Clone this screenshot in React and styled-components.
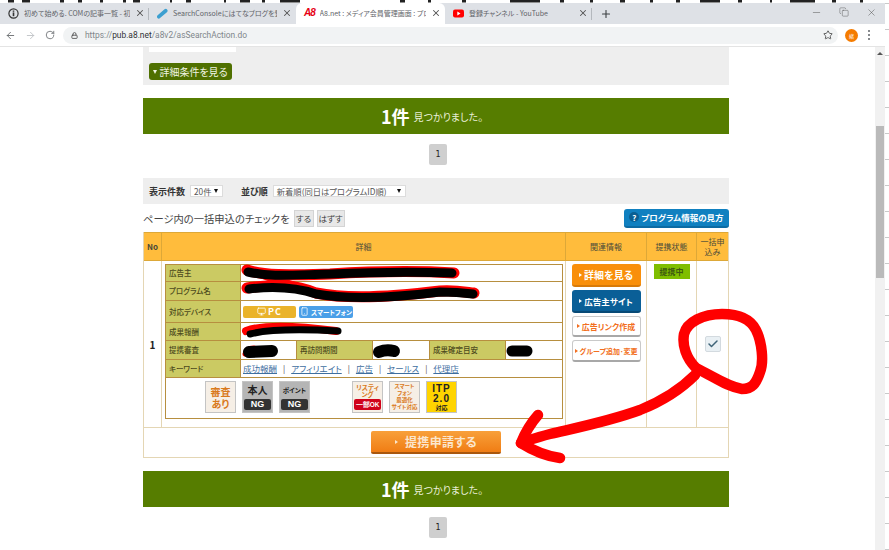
import React from "react";
import styled, { createGlobalStyle } from "styled-components";
import {
  ArrowLeft,
  ArrowRight,
  RotateCw,
  Lock,
  Star,
  X,
  Plus,
  Minus,
  Copy,
  Monitor,
  Smartphone,
  Check,
} from "lucide-react";

const GlobalStyle = createGlobalStyle`
  html, body {
    margin: 0;
    padding: 0;
    background: #fff;
    overflow: hidden;
  }
  * { box-sizing: border-box; }
`;

const Frame = styled.div`
  position: relative;
  width: 889px;
  height: 550px;
  overflow: hidden;
  display: flex;
  flex-direction: column;
  font-family: "Noto Sans CJK JP", "Noto Sans", sans-serif;
  font-feature-settings: "palt";
  color: #333;
`;
const TopStrip = styled.svg`
  display: block;
  width: 889px;
  height: 3px;
  flex: none;
`;
const Body = styled.div`
  display: flex;
  flex: 1;
  min-height: 0;
`;
const Browser = styled.div`
  width: 885px;
  display: flex;
  flex-direction: column;
`;
const Ruler = styled.div`
  width: 4px;
  background-image: linear-gradient(to bottom, #c9c9c9 1px, #fff 1px);
  background-size: 4px 26px;
`;

/* tabs */
const TabBar = styled.div`
  height: 21px;
  flex: none;
  background: #dee1e6;
  display: flex;
  align-items: flex-end;
`;
const Tab = styled.div`
  width: ${(p) => p.$w}px;
  height: 21px;
  display: flex;
  align-items: center;
  padding: 0 4px 1px 8px;
  gap: 5px;
  font-size: 7px;
  line-height: 10px;
  color: #5f6368;
  background: ${(p) => (p.$active ? "#fff" : "transparent")};
  border-radius: 6px 6px 0 0;
  white-space: nowrap;
`;
const TabDivider = styled.div`
  width: 1px;
  height: 12px;
  align-self: center;
  margin-left: -1px;
  background: #b4b8bd;
`;
const TabTitle = styled.span`
  flex: 1;
  overflow: hidden;
`;
const NewTab = styled.div`
  width: 28px;
  height: 21px;
  display: flex;
  align-items: center;
  justify-content: center;
  color: #3c4043;
`;
const WindowControls = styled.div`
  margin-left: auto;
  height: 21px;
  display: flex;
  align-items: flex-start;
  gap: 17px;
  padding: 4px 8px 0 0;
  color: #444;
`;
const A8Mark = styled.span`
  color: #e60012;
  font-family: "Liberation Sans", sans-serif;
  font-weight: 700;
  font-style: italic;
  font-size: 10px;
  letter-spacing: -1px;
`;

/* address bar */
const Toolbar = styled.div`
  height: 22px;
  flex: none;
  background: #fff;
  display: flex;
  align-items: center;
  padding-left: 5px;
  color: #6a6d71;
`;
const NavIcons = styled.div`
  width: 58px;
  display: flex;
  align-items: center;
  gap: 9px;
`;
const Omnibox = styled.div`
  width: 775px;
  height: 17px;
  background: #f1f3f4;
  border-radius: 9px;
  display: flex;
  align-items: center;
  padding: 0 5px 0 8px;
  font-family: "Roboto", sans-serif;
  font-size: 8.4px;
  color: #80868b;
`;
const Host = styled.span`
  color: #303134;
`;
const Url = styled.div`
  margin-left: 7px;
  flex: 1;
`;
const Avatar = styled.div`
  width: 13px;
  height: 13px;
  margin-left: 7px;
  border-radius: 50%;
  background: #f57c00;
  color: #fff;
  font-size: 5px;
  display: flex;
  align-items: center;
  justify-content: center;
`;
const MenuDots = styled.div`
  margin-left: 10px;
  display: flex;
  flex-direction: column;
  gap: 2px;
`;
const Dot = styled.i`
  width: 2px;
  height: 2px;
  border-radius: 50%;
  background: #5f6368;
`;

/* page */
const Viewport = styled.div`
  flex: 1;
  min-height: 0;
  display: flex;
  border-top: 1px solid #e4e4e4;
`;
const Page = styled.div`
  flex: 1;
  padding-left: 143px;
  overflow: hidden;
`;
const Scrollbar = styled.div`
  width: 10px;
  background: #f1f1f1;
  display: flex;
  flex-direction: column;
  align-items: center;
`;
const ScrollArrow = styled.div`
  margin: 5px 0 71px;
  height: 3px;
  width: 6px;
  border-left: 3px solid transparent;
  border-right: 3px solid transparent;
  border-bottom: 3px solid #555;
`;
const ScrollThumb = styled.div`
  width: 8px;
  height: 152px;
  background: #bababa;
`;
const Column = styled.div`
  width: 586px;
`;
const SearchPanel = styled.div`
  height: 38px;
  background: #eeeeee;
  padding: 0 6px;
`;
const StubInput = styled.div`
  width: 87px;
  height: 5px;
  background: #fff;
`;
const DetailToggle = styled.div`
  width: 83px;
  height: 17px;
  margin-top: 11px;
  background: #4f7000;
  border-radius: 3px;
  color: #f0f4e4;
  font-size: 10px;
  display: flex;
  align-items: center;
  justify-content: center;
  gap: 2px;
`;
const Tri = styled.i`
  width: 0;
  height: 0;
  flex: none;
  border-left: ${(p) => p.$s}px solid ${(p) => p.$c};
  border-top: ${(p) => p.$s * 0.75}px solid transparent;
  border-bottom: ${(p) => p.$s * 0.75}px solid transparent;
`;
const TriDown = styled.i`
  width: 0;
  height: 0;
  border-top: 4px solid #f0f4e4;
  border-left: 2.5px solid transparent;
  border-right: 2.5px solid transparent;
`;
const ResultBar = styled.div`
  height: 36px;
  margin-top: 13px;
  background: #567d00;
  color: #e9efd9;
  display: flex;
  align-items: center;
  justify-content: center;
  font-size: 10px;
  gap: 4px;
  padding-right: 8px;
`;
const ResultCount = styled.b`
  font-size: 18px;
  font-weight: 700;
  color: #fff;
`;
const Pager = styled.div`
  width: 18px;
  height: 21px;
  margin: 10px 0 0 286px;
  background: #cfcfcf;
  border-radius: 2px;
  font-family: "DejaVu Sans", sans-serif;
  font-size: 8px;
  color: #222;
  display: flex;
  align-items: center;
  justify-content: center;
`;
const SortPanel = styled.div`
  height: 26px;
  margin-top: 13px;
  background: #eeeeee;
  display: flex;
  align-items: center;
  padding-left: 6px;
  font-size: 9px;
  font-weight: 700;
`;
const SortLabel = styled.span`
  margin-left: ${(p) => p.$ml || 0}px;
`;
const Select = styled.div`
  height: 12px;
  width: ${(p) => p.$w}px;
  margin-left: 5px;
  background: #fff;
  border: 1px solid #dcdcdc;
  font-size: 8.3px;
  font-weight: 400;
  color: #555;
  display: flex;
  align-items: center;
  justify-content: space-between;
  padding: 0 4px 0 3px;
  white-space: nowrap;
`;
const SelectArrow = styled.i`
  border-top: 4px solid #111;
  border-left: 2.5px solid transparent;
  border-right: 2.5px solid transparent;
`;
const BulkRow = styled.div`
  height: 28px;
  display: flex;
  align-items: center;
  font-size: 10.3px;
  color: #444;
  gap: 3px;
`;
const SmallButton = styled.div`
  width: ${(p) => p.$w}px;
  height: 17px;
  margin-left: ${(p) => p.$ml || 0}px;
  background: #e8e8e8;
  border: 1px solid #d4d4d4;
  font-size: 8.5px;
  display: flex;
  align-items: center;
  justify-content: center;
  white-space: nowrap;
`;
const HelpButton = styled.div`
  margin-left: auto;
  width: 105px;
  height: 19px;
  background: #1080c0;
  border-bottom: 2px solid #0d6ba3;
  border-radius: 3px;
  color: #fff;
  font-size: 8.5px;
  font-weight: 700;
  display: flex;
  align-items: center;
  justify-content: center;
  gap: 2px;
`;
const HelpCircle = styled.i`
  width: 10px;
  height: 10px;
  border-radius: 50%;
  background: #0b5f92;
  font-style: normal;
  font-size: 8px;
  display: flex;
  align-items: center;
  justify-content: center;
`;

/* result table */
const ResultTable = styled.div`
  display: grid;
  grid-template-columns: 18px 404px 81px 50px 31px;
  grid-template-rows: 29px 167px 29px;
  border: 1px solid #e4d6b4;
  border-top: 0;
`;
const HeadCell = styled.div`
  background: #ffbc3c;
  border-top: 1px solid #dda838;
  border-bottom: 1px solid #dda838;
  border-right: ${(p) => (p.$last ? "0" : "1px solid #dda838")};
  font-size: 8px;
  line-height: 10px;
  font-weight: ${(p) => (p.$bold ? 700 : 400)};
  color: #4a4a3a;
  display: flex;
  align-items: center;
  justify-content: center;
  text-align: center;
`;
const BodyCell = styled.div`
  border-right: ${(p) => (p.$last ? "0" : "1px solid #e4d6b4")};
  border-bottom: 1px solid #e4d6b4;
  display: flex;
  flex-direction: ${(p) => (p.$column ? "column" : "row")};
  align-items: ${(p) => p.$align || "flex-start"};
  justify-content: ${(p) => p.$justify || "flex-start"};
  padding: ${(p) => p.$pad || 0};
  gap: ${(p) => p.$gap || 0}px;
`;
const RowNumber = styled.b`
  font-size: 10px;
  color: #222;
`;
const InnerTable = styled.div`
  width: 398px;
  height: 155px;
  border: 1px solid #b78f3f;
  display: flex;
  flex-direction: column;
`;
const InnerRow = styled.div`
  height: ${(p) => p.$h}px;
  display: flex;
  border-bottom: 1px solid #b78f3f;
  flex: none;
`;
const Label = styled.div`
  width: ${(p) => p.$w}px;
  flex: none;
  background: #cbca63;
  border-right: 1px solid #b78f3f;
  border-left: ${(p) => (p.$left ? "1px solid #b78f3f" : "0")};
  font-size: 7.5px;
  line-height: 10px;
  font-weight: 500;
  color: #4d4a1d;
  padding-left: 3px;
  display: flex;
  align-items: center;
`;
const Value = styled.div`
  width: ${(p) => (p.$w ? `${p.$w}px` : "auto")};
  flex: ${(p) => (p.$w ? "none" : 1)};
  display: flex;
  align-items: center;
  gap: 3px;
  padding-left: 2px;
  font-size: 8.5px;
  line-height: 10px;
`;
const DeviceTag = styled.div`
  height: 12px;
  width: ${(p) => p.$w}px;
  border-radius: 2px;
  background: ${(p) => p.$bg};
  color: ${(p) => p.$fg};
  font-size: ${(p) => p.$size}px;
  font-weight: 700;
  letter-spacing: ${(p) => p.$ls || 0}px;
  display: flex;
  align-items: center;
  justify-content: center;
  gap: 2px;
  white-space: nowrap;
`;
const Keyword = styled.span`
  color: #3f6f9f;
  text-decoration: underline;
  font-size: 8.5px;
`;
const Sep = styled.span`
  font-size: 8px;
  color: #444;
  margin: 0 6px;
`;
const BadgeRow = styled.div`
  flex: 1;
  display: flex;
  align-items: center;
  padding: 0 0 2px 39px;
  gap: 6px;
`;
const BadgeGap = styled.div`
  width: 30px;
`;
const Badge = styled.div`
  width: 31px;
  height: 32px;
  flex: none;
  background: ${(p) => p.$bg};
  border: 1px solid #c4c4c4;
  color: ${(p) => p.$fg};
  display: flex;
  flex-direction: column;
  align-items: center;
  justify-content: space-between;
  text-align: center;
  font-weight: 700;
  font-size: ${(p) => p.$size}px;
  line-height: ${(p) => p.$line}px;
  padding: ${(p) => p.$pad || "2px 0"};
  overflow: hidden;
`;
const BadgePill = styled.span`
  width: 27px;
  height: 11px;
  flex: none;
  border-radius: 2px;
  background: ${(p) => p.$bg};
  color: #fff;
  font-family: "Liberation Sans", sans-serif;
  font-size: ${(p) => p.$size}px;
  line-height: 11px;
  font-weight: 700;
`;
const ItpBig = styled.span`
  font-family: "Liberation Sans", sans-serif;
  font-size: 10px;
  line-height: 10px;
  letter-spacing: 1px;
  color: #222;
`;
const ActionButton = styled.div`
  width: 69px;
  height: ${(p) => p.$h}px;
  flex: none;
  border-radius: 3px;
  background: ${(p) => p.$bg};
  border: ${(p) => (p.$outline ? "1px solid #c9c9c9" : "0")};
  border-bottom: 2px solid ${(p) => p.$edge};
  color: ${(p) => p.$fg};
  font-size: ${(p) => p.$size}px;
  font-weight: 700;
  display: flex;
  align-items: center;
  justify-content: center;
  gap: 2px;
  white-space: nowrap;
`;
const StatusTag = styled.div`
  width: 36px;
  height: 15px;
  background: #7fbe00;
  color: #3d5a10;
  font-size: 8px;
  font-weight: 700;
  display: flex;
  align-items: center;
  justify-content: center;
`;
const CheckBox = styled.div`
  width: 16px;
  height: 16px;
  background: #e9f0f4;
  border: 1px solid #d3dadf;
  border-radius: 2px;
  color: #3f6478;
  display: flex;
  align-items: center;
  justify-content: center;
`;
const SubmitCell = styled.div`
  grid-column: 1 / -1;
  display: flex;
  align-items: center;
  justify-content: center;
`;
const SubmitButton = styled.div`
  width: 130px;
  height: 23px;
  border-radius: 2px;
  background: linear-gradient(#f8a03a, #f07d14);
  border-bottom: 2px solid #a9570d;
  color: #fbe6cd;
  font-size: 12px;
  font-weight: 700;
  letter-spacing: 0.4px;
  display: flex;
  align-items: center;
  justify-content: center;
  gap: 7px;
`;
const Overlay = styled.svg`
  position: absolute;
  left: 0;
  top: 0;
  width: 889px;
  height: 550px;
  pointer-events: none;
`;

const clippedMarks = [
  [8, 6], [22, 8], [60, 4], [78, 4], [100, 3], [123, 3], [133, 7], [170, 2], [186, 5],
  [224, 2], [240, 10], [262, 3], [280, 20], [400, 5], [428, 3], [462, 4], [510, 30],
  [560, 4], [590, 3], [620, 5], [650, 3], [676, 4], [700, 20], [738, 4], [770, 2],
  [790, 25], [832, 4], [860, 3],
];

const keywords = ["成功報酬", "アフィリエイト", "広告", "セールス", "代理店"];

const Redactions = () => (
  <Overlay viewBox="0 0 889 550">
    <g fill="none" strokeLinecap="round" strokeLinejoin="round">
      {/* advertiser + program scribble */}
      <path d="M247 270 C265 276 290 275 330 274 C380 271 420 271 454 273" stroke="#f00" strokeWidth="11" />
      <path d="M247 288 C275 284 295 284 316 293 C350 300 400 296 440 291 C455 290 465 292 474 293" stroke="#f00" strokeWidth="11" />
      <path d="M249 270 C265 276 285 283 312 292" stroke="#f00" strokeWidth="8" />
      <path d="M248 272 C270 277 290 275 330 274 C380 272 420 272 452 273" stroke="#000" strokeWidth="9" />
      <path d="M249 289 C275 286 295 287 316 294 C350 300 400 297 440 292 C455 292 465 293 473 294" stroke="#000" strokeWidth="9" />
      {/* reward scribble */}
      <path d="M246 331 C262 325 290 325 336 331" stroke="#f00" strokeWidth="8" />
      <path d="M250 334 C270 329 300 329 338 331" stroke="#000" strokeWidth="7" />
      {/* short redactions */}
      <path d="M245 354 C246 349 250 348 254 348" stroke="#f00" strokeWidth="5" />
      <path d="M249 352 L272 351" stroke="#000" strokeWidth="12" />
      <path d="M379 352 C384 350 390 350 394 351" stroke="#000" strokeWidth="12" />
      <path d="M512 351 L527 351" stroke="#000" strokeWidth="11" />
      {/* circle around the checkbox */}
      <path
        d="M696 368 C686 358 682 345 684 334 C687 322 703 314 722 314 C738 314 750 318 756 330 C762 342 764 362 760 372 C756 384 752 389 742 389 C728 387 716 378 696 368"
        stroke="#f00"
        strokeWidth="10.5"
      />
      {/* arrow to the submit button */}
      <path d="M695 375 C678 392 660 402 640 410 C610 421 580 427 550 434 C538 437 530 440 521 443" stroke="#f00" strokeWidth="10.5" />
      <path d="M538 415 C530 424 525 433 521 443 C532 450 545 456 560 458" stroke="#f00" strokeWidth="10.5" />
    </g>
  </Overlay>
);

const App = () => {
  return (
    <>
      <GlobalStyle />
      <Frame>
        <TopStrip viewBox="0 0 889 3">
          {clippedMarks.map(([x, w]) => (
            <rect key={x} x={x} y="0" width={w} height="2.5" fill="#222" />
          ))}
        </TopStrip>
        <Body>
          <Browser>
            <TabBar>
              <Tab $w={149}>
                <svg width="11" height="11" viewBox="0 0 11 11">
                  <circle cx="5.5" cy="5.5" r="4.6" fill="none" stroke="#333" strokeWidth="1.2" />
                  <rect x="4.7" y="4.4" width="1.6" height="3.8" fill="#333" />
                  <rect x="4.7" y="2.5" width="1.6" height="1.3" fill="#333" />
                </svg>
                <TabTitle>初めて始める. COMの記事一覧 - 初</TabTitle>
                <X size={10} strokeWidth={2.5} color="#555" />
              </Tab>
              <TabDivider />
              <Tab $w={147}>
                <svg width="11" height="11" viewBox="0 0 12 11">
                  <path d="M2 9 L9.5 2.5" stroke="#3c9fd0" strokeWidth="4" strokeLinecap="round" />
                </svg>
                <TabTitle>SearchConsoleにはてなブログを登録</TabTitle>
                <X size={10} strokeWidth={2.5} color="#555" />
              </Tab>
              <Tab $w={149} $active>
                <A8Mark>A8</A8Mark>
                <TabTitle>A8.net : メディア会員管理画面 : プロ</TabTitle>
                <X size={10} strokeWidth={2.5} color="#555" />
              </Tab>
              <Tab $w={147}>
                <svg width="11" height="9" viewBox="0 0 11 9">
                  <rect width="11" height="8" y="0.5" rx="2" fill="#f00" />
                  <path d="M4.3 2.5 L7.5 4.5 L4.3 6.5 Z" fill="#fff" />
                </svg>
                <TabTitle>登録チャンネル - YouTube</TabTitle>
                <X size={10} strokeWidth={2.5} color="#555" />
              </Tab>
              <TabDivider />
              <NewTab>
                <Plus size={12} strokeWidth={2.2} />
              </NewTab>
              <WindowControls>
                <Minus size={11} strokeWidth={1} />
                <Copy size={10} strokeWidth={1} />
                <X size={11} strokeWidth={1} />
              </WindowControls>
            </TabBar>
            <Toolbar>
              <NavIcons>
                <ArrowLeft size={11} strokeWidth={2} />
                <ArrowRight size={11} strokeWidth={2} color="#c0c3c6" />
                <RotateCw size={10} strokeWidth={2} />
              </NavIcons>
              <Omnibox>
                <Lock size={7} strokeWidth={3} color="#555" />
                <Url>
                  https://<Host>pub.a8.net</Host>/a8v2/asSearchAction.do
                </Url>
                <Star size={10} strokeWidth={2} color="#444" />
              </Omnibox>
              <Avatar>緒</Avatar>
              <MenuDots>
                <Dot />
                <Dot />
                <Dot />
              </MenuDots>
            </Toolbar>
            <Viewport>
              <Page>
                <Column>
                  <SearchPanel>
                    <StubInput />
                    <DetailToggle>
                      <TriDown />
                      詳細条件を見る
                    </DetailToggle>
                  </SearchPanel>
                  <ResultBar>
                    <ResultCount>1件</ResultCount>見つかりました。
                  </ResultBar>
                  <Pager>1</Pager>
                  <SortPanel>
                    <SortLabel>表示件数</SortLabel>
                    <Select $w={33}>
                      20件
                      <SelectArrow />
                    </Select>
                    <SortLabel $ml={18}>並び順</SortLabel>
                    <Select $w={133}>
                      新着順(同日はプログラムID順)
                      <SelectArrow />
                    </Select>
                  </SortPanel>
                  <BulkRow>
                    ページ内の一括申込のチェックを
                    <SmallButton $w={20} $ml={1}>する</SmallButton>
                    <SmallButton $w={28}>はずす</SmallButton>
                    <HelpButton>
                      <HelpCircle>?</HelpCircle>
                      プログラム情報の見方
                    </HelpButton>
                  </BulkRow>
                  <ResultTable>
                    <HeadCell $bold>No</HeadCell>
                    <HeadCell>詳細</HeadCell>
                    <HeadCell>関連情報</HeadCell>
                    <HeadCell>提携状態</HeadCell>
                    <HeadCell $last>
                      一括申
                      <br />
                      込み
                    </HeadCell>

                    <BodyCell $align="center" $justify="center">
                      <RowNumber>1</RowNumber>
                    </BodyCell>
                    <BodyCell $pad="3px 0 0 3px">
                      <InnerTable>
                        <InnerRow $h={17}>
                          <Label $w={75}>広告主</Label>
                          <Value />
                        </InnerRow>
                        <InnerRow $h={19}>
                          <Label $w={75}>プログラム名</Label>
                          <Value />
                        </InnerRow>
                        <InnerRow $h={22}>
                          <Label $w={75}>対応デバイス</Label>
                          <Value>
                            <DeviceTag $w={53} $bg="#eab32a" $fg="#fff" $size={9} $ls={1}>
                              <Monitor size={9} />
                              PC
                            </DeviceTag>
                            <DeviceTag $w={54} $bg="#4a9fe8" $fg="#fff" $size={6.5}>
                              <Smartphone size={9} />
                              スマートフォン
                            </DeviceTag>
                          </Value>
                        </InnerRow>
                        <InnerRow $h={18}>
                          <Label $w={75}>成果報酬</Label>
                          <Value />
                        </InnerRow>
                        <InnerRow $h={19}>
                          <Label $w={75}>提携審査</Label>
                          <Value $w={55} />
                          <Label $w={77} $left>
                            再訪問期間
                          </Label>
                          <Value $w={56} />
                          <Label $w={77} $left>
                            成果確定目安
                          </Label>
                          <Value />
                        </InnerRow>
                        <InnerRow $h={18}>
                          <Label $w={75}>キーワード</Label>
                          <Value>
                            <span>
                              {keywords.map((word, i) => (
                                <React.Fragment key={word}>
                                  <Keyword>{word}</Keyword>
                                  {i < keywords.length - 1 && <Sep>|</Sep>}
                                </React.Fragment>
                              ))}
                            </span>
                          </Value>
                        </InnerRow>
                        <BadgeRow>
                          <Badge $bg="#f6efe6" $fg="#d9791b" $size={10} $line={12} $pad="4px 0">
                            <span>
                              審査
                              <br />
                              あり
                            </span>
                          </Badge>
                          <Badge $bg="#b5b5b5" $fg="#222" $size={10} $line={14} $pad="1px 0 2px">
                            本人
                            <BadgePill $bg="#333" $size={9}>NG</BadgePill>
                          </Badge>
                          <Badge $bg="#b5b5b5" $fg="#222" $size={6.5} $line={14} $pad="1px 0 2px">
                            ポイント
                            <BadgePill $bg="#333" $size={9}>NG</BadgePill>
                          </Badge>
                          <BadgeGap />
                          <Badge $bg="#f6efe6" $fg="#d9791b" $size={6.5} $line={7} $pad="2px 0">
                            <span>
                              リスティ
                              <br />
                              ング
                            </span>
                            <BadgePill $bg="#d0021b" $size={6.5}>一部OK</BadgePill>
                          </Badge>
                          <Badge $bg="#f6efe6" $fg="#d9791b" $size={5.5} $line={7} $pad="1px 0">
                            <span>
                              スマート
                              <br />
                              フォン
                              <br />
                              最適化
                              <br />
                              サイト対応
                            </span>
                          </Badge>
                          <Badge $bg="#ffd400" $fg="#222" $size={6} $line={7} $pad="2px 0 1px">
                            <ItpBig>ITP</ItpBig>
                            <ItpBig>2.0</ItpBig>
                            対応
                          </Badge>
                        </BadgeRow>
                      </InnerTable>
                    </BodyCell>
                    <BodyCell $column $align="center" $pad="3px 0 0 0" $gap={3}>
                      <ActionButton $h={23} $bg="#f98f0a" $edge="#d87a08" $fg="#fff" $size={10}>
                        <Tri $s={3} $c="#fff" />
                        詳細を見る
                      </ActionButton>
                      <ActionButton $h={23} $bg="#0a5f97" $edge="#084a76" $fg="#fff" $size={8.5}>
                        <Tri $s={3} $c="#fff" />
                        広告主サイト
                      </ActionButton>
                      <ActionButton $h={21} $bg="#fff" $edge="#a8a8a8" $fg="#f26f21" $size={8} $outline>
                        <Tri $s={3} $c="#f26f21" />
                        広告リンク作成
                      </ActionButton>
                      <ActionButton $h={22} $bg="#fff" $edge="#a8a8a8" $fg="#f26f21" $size={7} $outline>
                        <Tri $s={3} $c="#f26f21" />
                        グループ追加･変更
                      </ActionButton>
                    </BodyCell>
                    <BodyCell $justify="center" $pad="3px 0 0 0">
                      <StatusTag>提携中</StatusTag>
                    </BodyCell>
                    <BodyCell $last $align="center" $justify="center" $pad="0 0 1px 0">
                      <CheckBox>
                        <Check size={12} strokeWidth={3} />
                      </CheckBox>
                    </BodyCell>
                    <SubmitCell>
                      <SubmitButton>
                        <Tri $s={3} $c="#fbe6cd" />
                        提携申請する
                      </SubmitButton>
                    </SubmitCell>
                  </ResultTable>
                  <ResultBar>
                    <ResultCount>1件</ResultCount>見つかりました。
                  </ResultBar>
                  <Pager>1</Pager>
                </Column>
              </Page>
              <Scrollbar>
                <ScrollArrow />
                <ScrollThumb />
              </Scrollbar>
            </Viewport>
          </Browser>
          <Ruler />
        </Body>
        <Redactions />
      </Frame>
    </>
  );
};

export default App;
